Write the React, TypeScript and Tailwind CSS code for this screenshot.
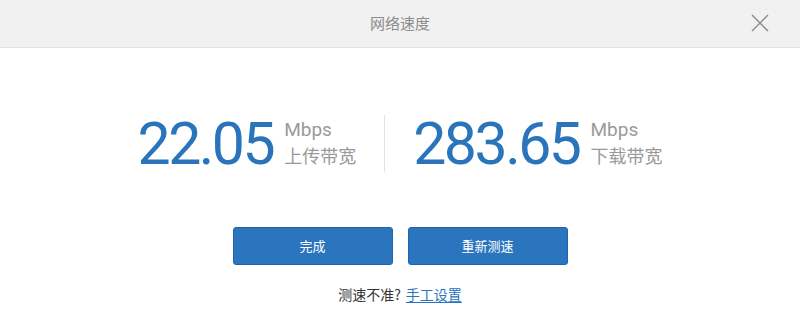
import React from "react";

const cjk = '"Noto Sans CJK SC", "Microsoft YaHei", sans-serif';

function Stat({ value, label }: { value: string; label: string }) {
  return (
    <div className="flex items-center">
      <div
        className="text-[59px] leading-none font-normal text-[#2a74bb] tracking-[-2.5px]"
        style={{ fontFamily: 'Roboto, "Liberation Sans", sans-serif' }}
      >
        {value}
      </div>
      <div className="ml-[11px] flex flex-col text-[#9a9a9a]">
        <div className="text-[19px] leading-[24px]" style={{ fontFamily: 'Roboto, sans-serif' }}>
          Mbps
        </div>
        <div className="text-[18px] leading-[27px]" style={{ fontFamily: cjk }}>
          {label}
        </div>
      </div>
    </div>
  );
}

export default function App() {
  return (
    <div className="w-[800px] h-[329px] bg-white flex flex-col" style={{ fontFamily: cjk }}>
      <div className="relative h-[48px] bg-[#f1f1f1] border-b border-[#e3e3e3] flex items-center justify-center">
        <span className="text-[15px] text-[#8c8c8c]">网络速度</span>
        <button className="absolute right-[31px] top-[14px] w-[18px] h-[18px]">
          <svg viewBox="0 0 18 18" width="18" height="18">
            <path d="M1 1 L17 17 M17 1 L1 17" stroke="#8a8a8a" strokeWidth="1.4" fill="none" />
          </svg>
        </button>
      </div>
      <div className="flex items-center justify-center mt-[66px]">
        <Stat value="22.05" label="上传带宽" />
        <div className="w-px h-[57px] bg-[#e2e2e2] mx-[28px]" />
        <Stat value="283.65" label="下载带宽" />
      </div>
      <div className="flex justify-center gap-[15px] mt-[54px]">
        <button className="w-[160px] h-[38px] rounded-[3px] bg-[#2a75bd] border border-[#1f65a8] text-white text-[13px]">
          完成
        </button>
        <button className="w-[160px] h-[38px] rounded-[3px] bg-[#2a75bd] border border-[#1f65a8] text-white text-[13px]">
          重新测速
        </button>
      </div>
      <div className="flex justify-center mt-[19px] text-[14px]">
        <span className="text-[#333]">测速不准?</span>
        <a className="ml-[5px] text-[#2a74bb] underline underline-offset-2">手工设置</a>
      </div>
    </div>
  );
}
